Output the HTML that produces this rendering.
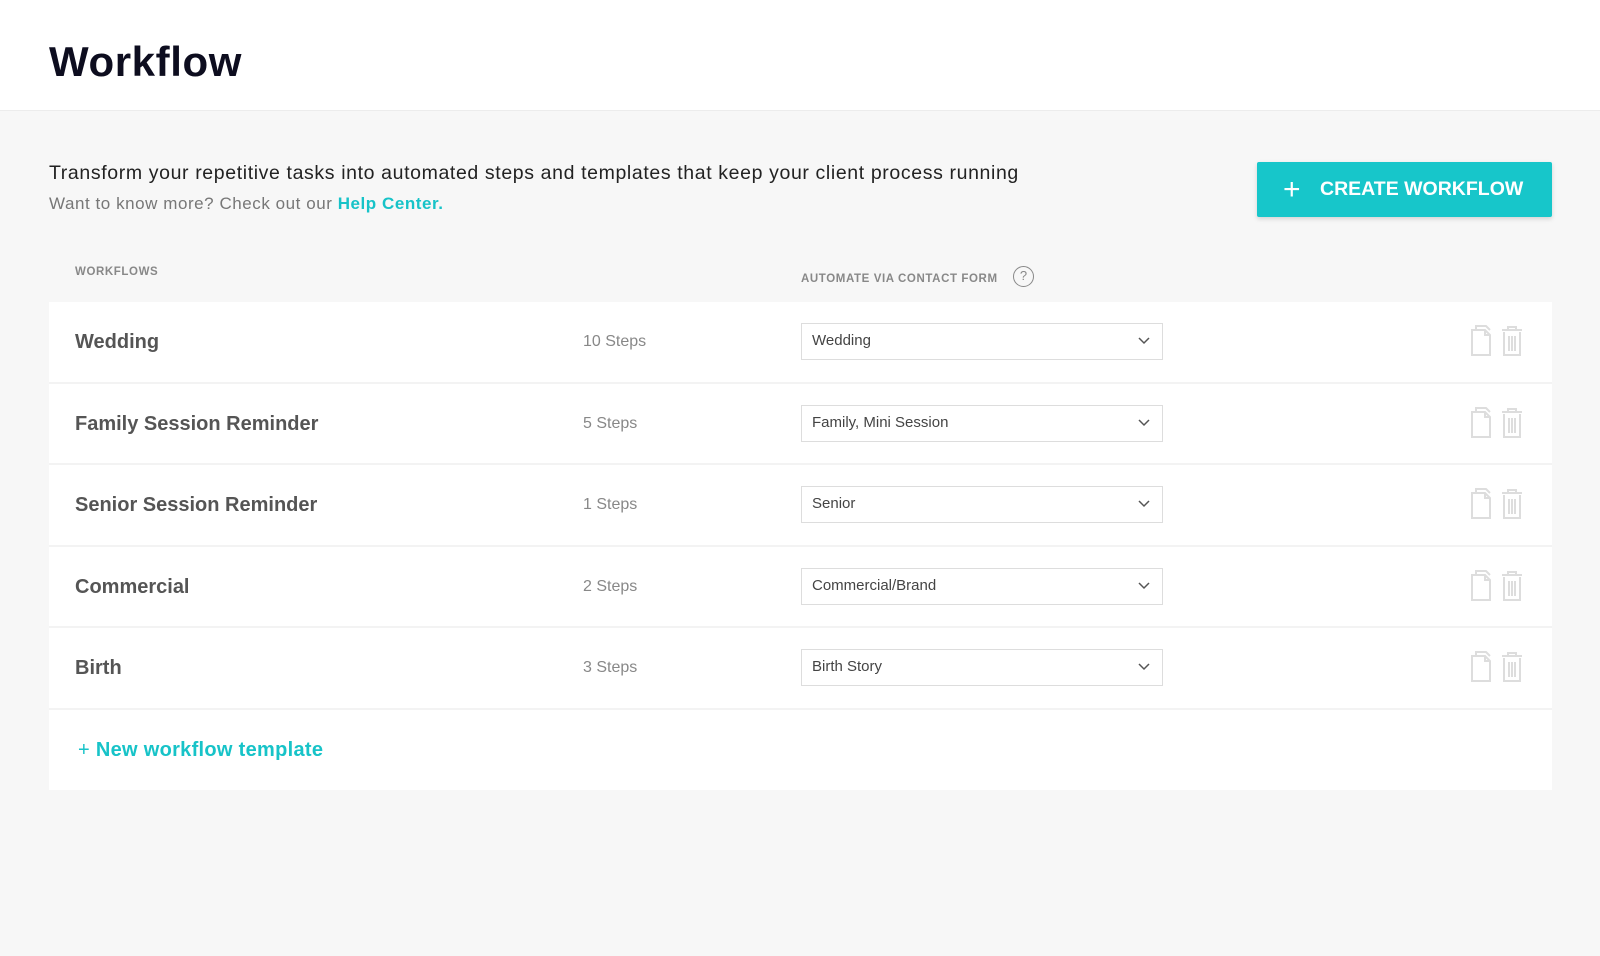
<!DOCTYPE html>
<html><head><meta charset="utf-8"><style>
*{box-sizing:border-box;margin:0;padding:0}
body{width:1600px;height:956px;background:#f7f7f7;font-family:"Liberation Sans",sans-serif;overflow:hidden;position:relative}
.hdr{position:absolute;left:0;top:0;width:1600px;height:111px;background:#fff;border-bottom:1px solid #ececec}
.hdr h1{position:absolute;left:49px;top:38px;font-size:42px;font-weight:bold;color:#0d0d1f;letter-spacing:0.6px;line-height:48px}
.intro{position:absolute;left:49px;top:160px;font-size:19.5px;color:#222;line-height:26px;letter-spacing:0.62px}
.sub{position:absolute;left:49px;top:192px;font-size:17px;color:#777;line-height:24px;letter-spacing:0.55px}
.sub b{color:#17c3c8}
.btn{position:absolute;left:1257px;top:162px;width:295px;height:55px;background:#17c6ca;border-radius:2px;box-shadow:0 2px 5px rgba(0,0,0,.15);color:#fff;font-weight:bold;font-size:19.5px;line-height:55px;padding-left:63px}
.btn .pl{position:absolute;left:26px;top:0;font-size:30px;font-weight:normal}
.ch{position:absolute;font-size:11.5px;font-weight:bold;color:#888;letter-spacing:.6px}
.q{position:absolute;left:1013px;top:266px;width:21px;height:21px;border:1.5px solid #888;border-radius:50%;font-size:13px;color:#888;text-align:center;line-height:18px}
.tbl{position:absolute;left:49px;top:302px;width:1503px;background:#fff}
.row{height:81.6px;border-bottom:2px solid #f3f3f3;position:relative}
.nm{position:absolute;left:26px;top:0;line-height:80px;font-size:20px;font-weight:bold;color:#555}
.st{position:absolute;left:534px;line-height:80px;font-size:16px;color:#888}
.sel{position:absolute;left:752px;top:21px;width:362px;height:37px;border:1.5px solid #ddd;font-size:15px;color:#444;line-height:34px;padding-left:10px}
.sel svg{position:absolute;right:12px;top:13px}
.ic{position:absolute;top:22px}
.ft{height:80px;position:relative}
.ft>span{position:absolute;left:29px;line-height:80px;font-size:20px;font-weight:bold;color:#17c3c8;letter-spacing:0.3px}
</style></head><body>
<div class="hdr"><h1>Workflow</h1></div>
<div class="intro">Transform your repetitive tasks into automated steps and templates that keep your client process running</div>
<div class="sub">Want to know more? Check out our <b>Help Center.</b></div>
<div class="btn"><span class="pl">+</span>CREATE WORKFLOW</div>
<div class="ch" style="left:75px;top:266px">WORKFLOWS</div>
<div class="ch" style="left:801px;top:273px">AUTOMATE VIA CONTACT FORM</div>
<div class="q">?</div>
<div class="tbl">
<div class="row"><div class="nm">Wedding</div><div class="st">10 Steps</div><div class="sel">Wedding<svg width="12" height="8"><path d="M1 1l5 5 5-5" fill="none" stroke="#555" stroke-width="1.5"/></svg></div>
<svg class="ic" style="left:1420px" width="70" height="34"><path d="M3 6h13l5 5v20H3z M16 6v5h5" fill="none" stroke="#ddd" stroke-width="2"/><path d="M7 6V2h10l4 4" fill="none" stroke="#ddd" stroke-width="2"/><path d="M33 6h20M39 6V3h8v3M35 8v23h16V8M40 12v15M43 12v15M46 12v15" fill="none" stroke="#ddd" stroke-width="2"/></svg></div>
<div class="row"><div class="nm">Family Session Reminder</div><div class="st">5 Steps</div><div class="sel">Family, Mini Session<svg width="12" height="8"><path d="M1 1l5 5 5-5" fill="none" stroke="#555" stroke-width="1.5"/></svg></div>
<svg class="ic" style="left:1420px" width="70" height="34"><path d="M3 6h13l5 5v20H3z M16 6v5h5" fill="none" stroke="#ddd" stroke-width="2"/><path d="M7 6V2h10l4 4" fill="none" stroke="#ddd" stroke-width="2"/><path d="M33 6h20M39 6V3h8v3M35 8v23h16V8M40 12v15M43 12v15M46 12v15" fill="none" stroke="#ddd" stroke-width="2"/></svg></div>
<div class="row"><div class="nm">Senior Session Reminder</div><div class="st">1 Steps</div><div class="sel">Senior<svg width="12" height="8"><path d="M1 1l5 5 5-5" fill="none" stroke="#555" stroke-width="1.5"/></svg></div>
<svg class="ic" style="left:1420px" width="70" height="34"><path d="M3 6h13l5 5v20H3z M16 6v5h5" fill="none" stroke="#ddd" stroke-width="2"/><path d="M7 6V2h10l4 4" fill="none" stroke="#ddd" stroke-width="2"/><path d="M33 6h20M39 6V3h8v3M35 8v23h16V8M40 12v15M43 12v15M46 12v15" fill="none" stroke="#ddd" stroke-width="2"/></svg></div>
<div class="row"><div class="nm">Commercial</div><div class="st">2 Steps</div><div class="sel">Commercial/Brand<svg width="12" height="8"><path d="M1 1l5 5 5-5" fill="none" stroke="#555" stroke-width="1.5"/></svg></div>
<svg class="ic" style="left:1420px" width="70" height="34"><path d="M3 6h13l5 5v20H3z M16 6v5h5" fill="none" stroke="#ddd" stroke-width="2"/><path d="M7 6V2h10l4 4" fill="none" stroke="#ddd" stroke-width="2"/><path d="M33 6h20M39 6V3h8v3M35 8v23h16V8M40 12v15M43 12v15M46 12v15" fill="none" stroke="#ddd" stroke-width="2"/></svg></div>
<div class="row"><div class="nm">Birth</div><div class="st">3 Steps</div><div class="sel">Birth Story<svg width="12" height="8"><path d="M1 1l5 5 5-5" fill="none" stroke="#555" stroke-width="1.5"/></svg></div>
<svg class="ic" style="left:1420px" width="70" height="34"><path d="M3 6h13l5 5v20H3z M16 6v5h5" fill="none" stroke="#ddd" stroke-width="2"/><path d="M7 6V2h10l4 4" fill="none" stroke="#ddd" stroke-width="2"/><path d="M33 6h20M39 6V3h8v3M35 8v23h16V8M40 12v15M43 12v15M46 12v15" fill="none" stroke="#ddd" stroke-width="2"/></svg></div>
<div class="ft"><span><span style="font-weight:normal">+</span> New workflow template</span></div>
</div>
</body></html>
